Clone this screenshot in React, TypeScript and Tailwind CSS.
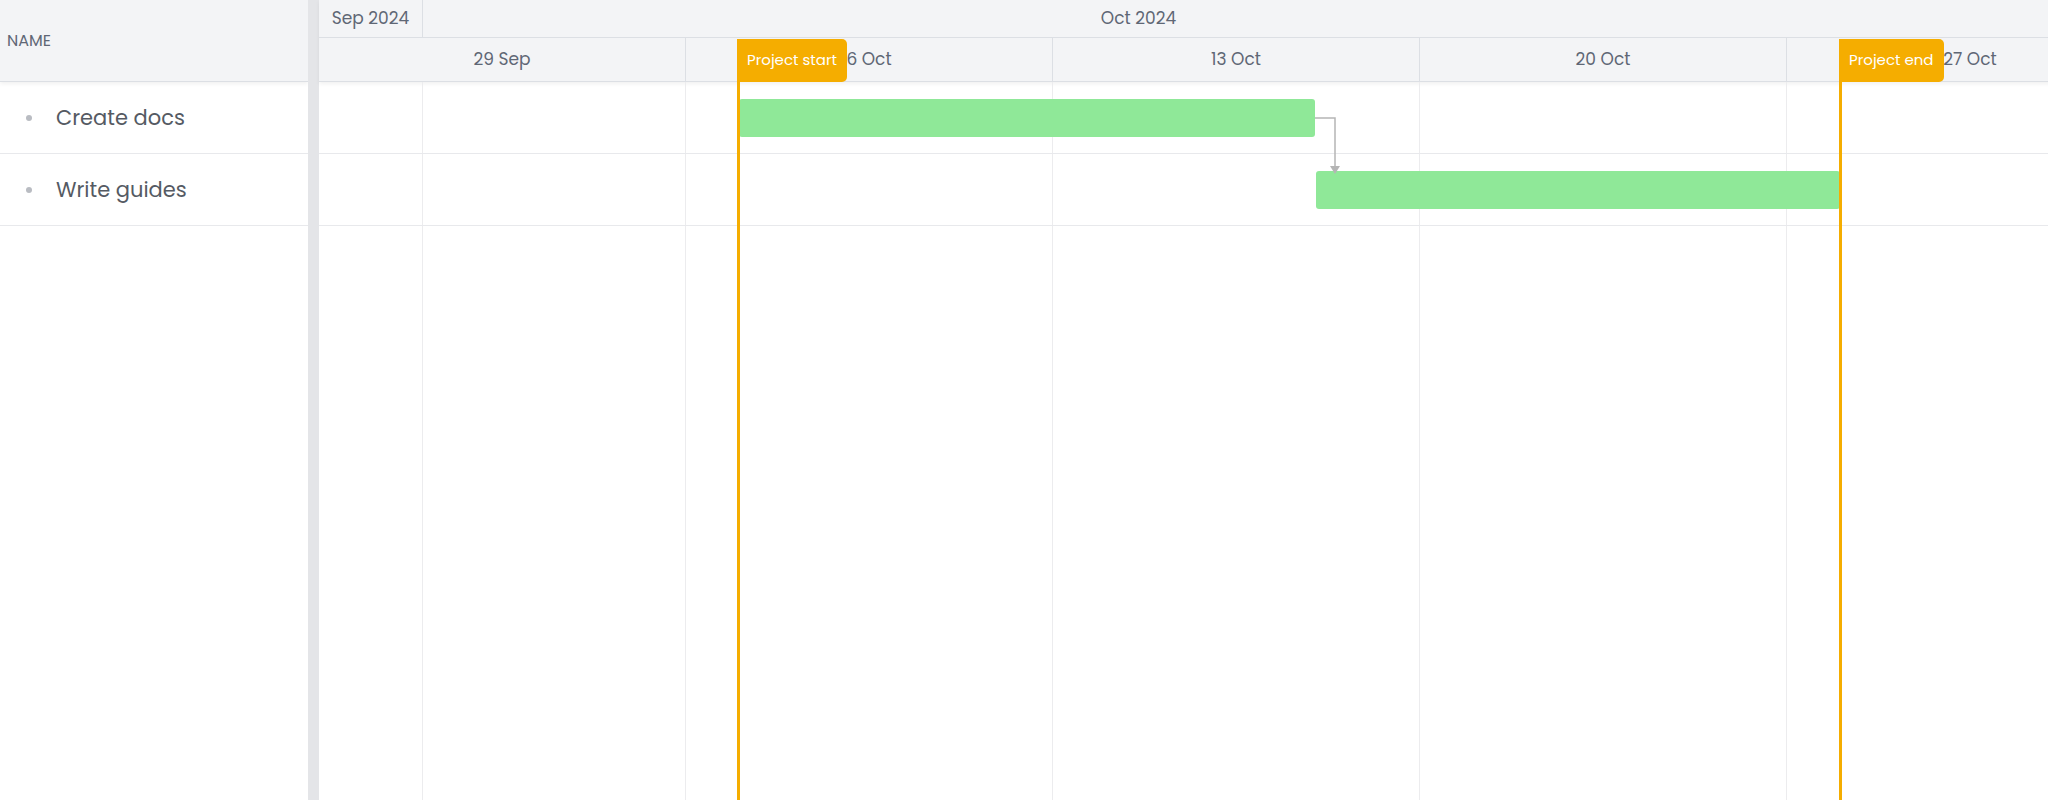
import React from 'react';

const font = { fontFamily: 'Poppins, Inter, "Noto Sans", sans-serif' };

// timeline origin = 319px; week columns in px
const weeks = [
  { label: '29 Sep', w: 367 },
  { label: '6 Oct', w: 367 },
  { label: '13 Oct', w: 367 },
  { label: '20 Oct', w: 367 },
  { label: '27 Oct', w: 367 },
];

const tasks = ['Create docs', 'Write guides'];

export default function App() {
  return (
    <div className="flex h-[800px] w-[2048px] overflow-hidden bg-white text-[#4b5563]" style={font}>
      {/* left grid */}
      <div className="flex w-[308px] shrink-0 flex-col">
        <div className="flex h-[82px] items-center border-b border-[#dcdfe4] bg-[#f3f4f6] pl-[7px] text-[16px] text-[#5f6775] shadow-[0_2px_4px_rgba(0,0,0,0.06)]">
          NAME
        </div>
        {tasks.map((t) => (
          <div key={t} className="flex h-[72px] items-center border-b border-[#e8e9ec] pl-[26px] text-[21px] text-[#555a63]">
            <span className="mr-[24px] h-[6px] w-[6px] rounded-full bg-[#b9bcc2]" />
            {t}
          </div>
        ))}
      </div>
      {/* splitter */}
      <div className="w-[11px] shrink-0 bg-[#e4e5e8]" />
      {/* timeline */}
      <div className="relative flex-1">
        <div className="border-b border-[#dcdfe4] bg-[#f3f4f6] text-[17px] text-[#5f6775] shadow-[0_2px_4px_rgba(0,0,0,0.06)]">
          <div className="flex h-[38px] border-b border-[#dcdfe4]">
            <div className="flex w-[104px] items-center justify-center border-r border-[#dcdfe4]">Sep 2024</div>
            <div className="flex flex-1 items-center justify-center pr-[300px]">Oct 2024</div>
          </div>
          <div className="flex h-[43px]">
            {weeks.map((w) => (
              <div key={w.label} style={{ width: w.w }} className="flex shrink-0 items-center justify-center border-r border-[#dcdfe4]">
                {w.label}
              </div>
            ))}
          </div>
        </div>
        {/* body */}
        <div className="relative h-[718px]">
          <div className="absolute inset-0 flex">
            <div className="w-[104px] shrink-0 border-r border-[#ececee]" />
            <div className="w-[263px] shrink-0 border-r border-[#ececee]" />
            <div className="w-[367px] shrink-0 border-r border-[#ececee]" />
            <div className="w-[367px] shrink-0 border-r border-[#ececee]" />
            <div className="w-[367px] shrink-0 border-r border-[#ececee]" />
          </div>
          <div className="relative">
            <div className="relative h-[72px] border-b border-[#e8e9ec]">
              <div className="absolute left-[420px] top-[17px] h-[38px] w-[576px] rounded-[3px] bg-[#8fe898]" />
            </div>
            <div className="relative h-[72px] border-b border-[#e8e9ec]">
              <div className="absolute left-[997px] top-[17px] h-[38px] w-[524px] rounded-[3px] bg-[#8fe898]" />
            </div>
          </div>
          {/* dependency */}
          <svg className="absolute left-[990px] top-[30px]" width="40" height="70" viewBox="0 0 40 70">
            <path d="M6 6 H26 V56" fill="none" stroke="#b5b5b5" strokeWidth="1.5" />
            <path d="M21 54 L26 62 L31 54 Z" fill="#b5b5b5" />
          </svg>
        </div>
        {/* markers */}
        <div className="absolute left-[418px] top-[39px] h-[761px] w-[3px] bg-[#f5ad00]" />
        <div className="absolute left-[418px] top-[39px] flex h-[43px] items-center rounded-r-[5px] bg-[#f5ad00] px-[10px] text-[15px] text-white">
          Project start
        </div>
        <div className="absolute left-[1520px] top-[39px] h-[761px] w-[3px] bg-[#f5ad00]" />
        <div className="absolute left-[1520px] top-[39px] flex h-[43px] items-center rounded-r-[5px] bg-[#f5ad00] px-[10px] text-[15px] text-white">
          Project end
        </div>
      </div>
    </div>
  );
}
